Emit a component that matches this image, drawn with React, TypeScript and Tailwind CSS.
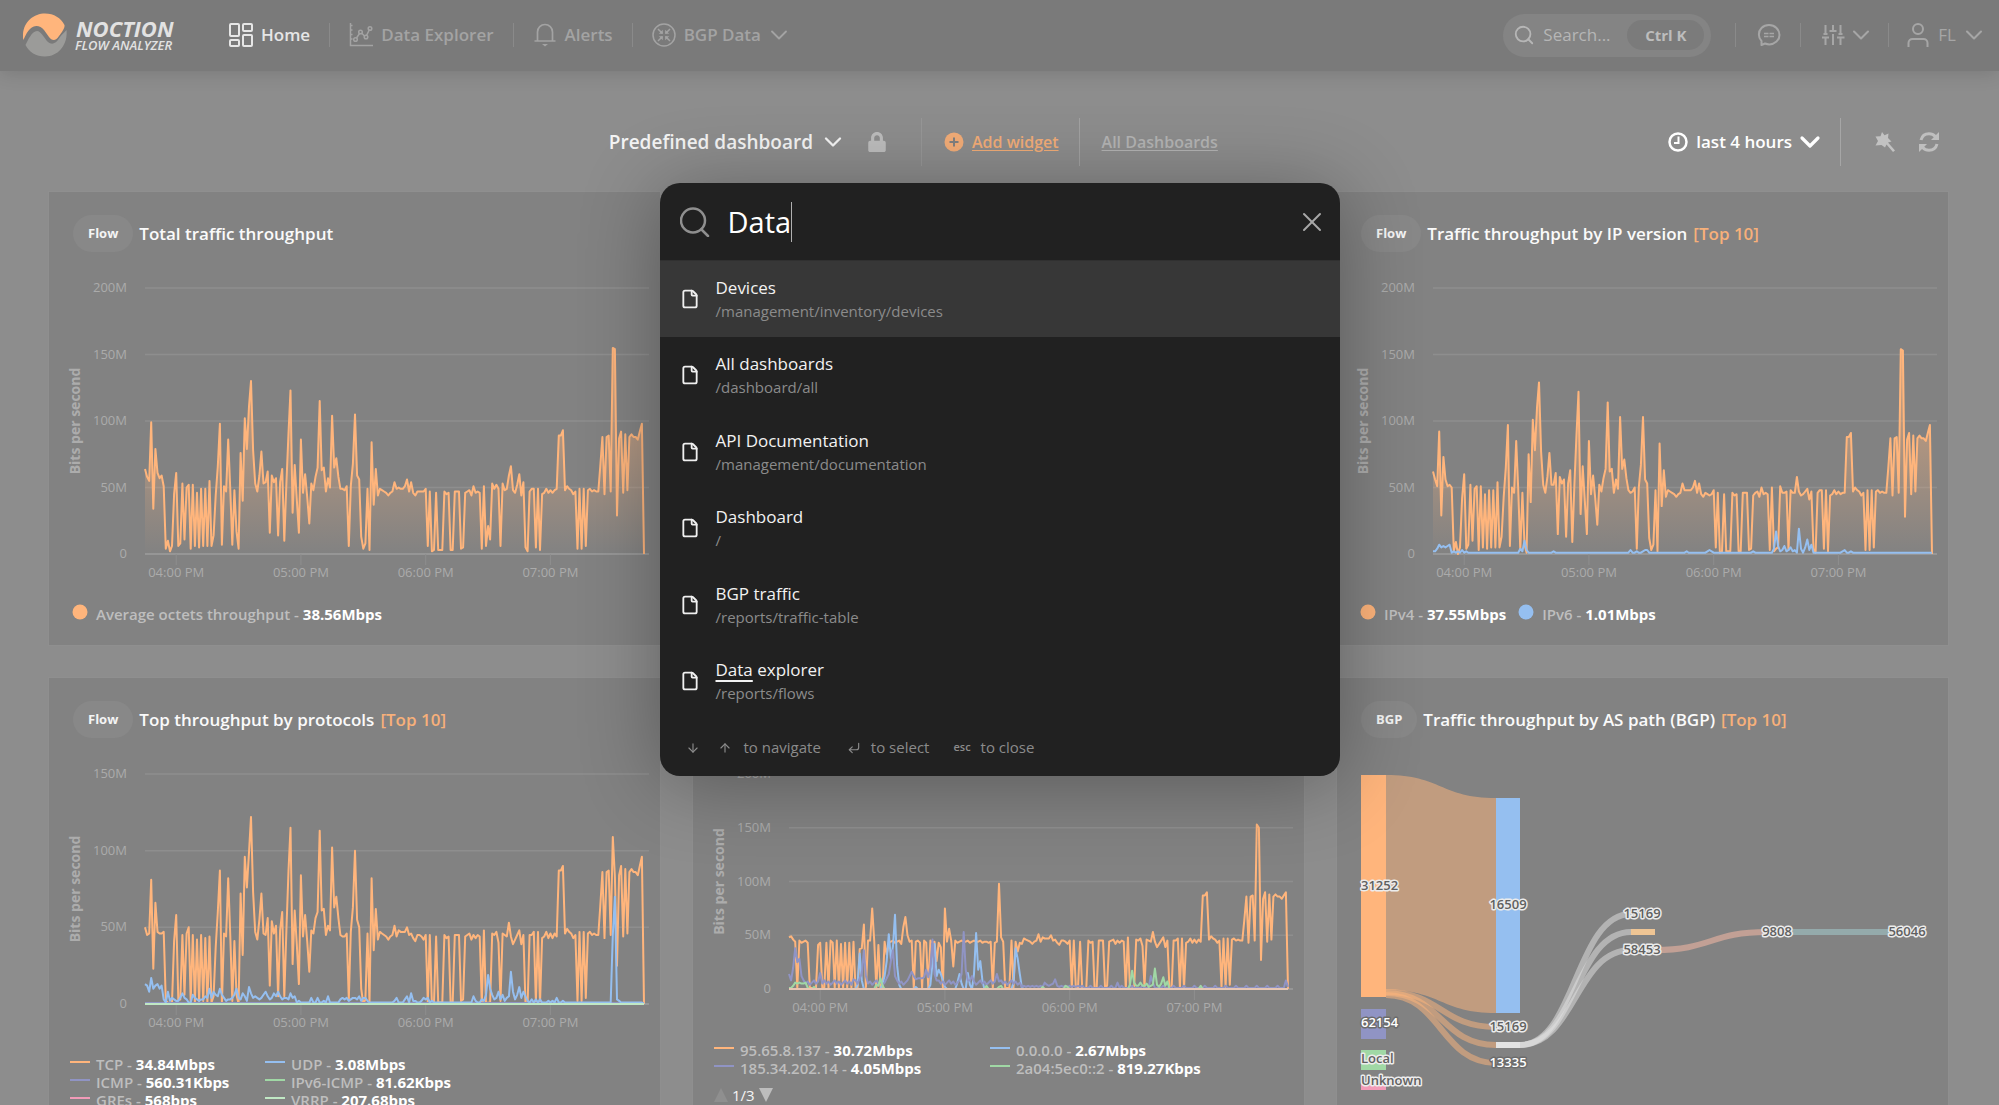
import React from "react";
import {
  ChevronDown,
  CornerDownLeft,
  ArrowDown,
  ArrowUp,
  File,
  Search,
  X,
} from "lucide-react";
import { FaLock } from "react-icons/fa";

const TOTAL = [
  64, 58, 55, 99, 34, 79, 61, 57, 59, 51, 4, 10, 2, 6, 45, 61, 6, 8, 53, 11, 50, 52, 4, 52, 6, 46, 5, 49, 6, 49,
  6, 55, 6, 14, 44, 66, 98, 7, 51, 47, 86, 50, 7, 48, 17, 4, 76, 40, 102, 79, 111, 130, 78, 53, 47, 59, 77, 53, 54, 62,
  16, 59, 54, 57, 14, 54, 64, 10, 53, 91, 123, 31, 67, 41, 16, 86, 46, 60, 43, 23, 53, 48, 58, 65, 115, 63, 65, 47, 57, 50,
  104, 65, 72, 58, 49, 49, 48, 51, 6, 51, 68, 105, 59, 56, 13, 4, 8, 49, 3, 84, 37, 64, 44, 49, 48, 47, 46, 44, 46, 47,
  54, 49, 50, 49, 49, 51, 56, 47, 54, 46, 44, 47, 47, 47, 47, 49, 6, 47, 2, 3, 46, 3, 3, 3, 47, 45, 46, 3, 3, 47,
  47, 47, 4, 5, 46, 47, 48, 44, 51, 46, 47, 46, 4, 51, 6, 21, 11, 53, 49, 52, 49, 6, 53, 48, 49, 59, 66, 48, 46, 52,
  60, 44, 54, 5, 2, 47, 49, 49, 5, 49, 3, 45, 46, 49, 46, 48, 46, 48, 49, 89, 89, 93, 48, 51, 49, 48, 45, 47, 4, 49,
  4, 49, 6, 48, 49, 47, 48, 47, 47, 66, 88, 45, 88, 89, 47, 155, 154, 29, 87, 92, 46, 90, 48, 88, 90, 88, 88, 86, 92, 98,
  0,
];

type Sparse = Record<number, number>;

const fill = (base: number, peaks: Sparse) => TOTAL.map((_, i) => peaks[i] ?? base);

const IPV6 = fill(1, {
  0: 2, 1: 2, 2: 4, 3: 7, 4: 5, 5: 6, 6: 5, 7: 6, 8: 7, 10: 2, 12: 2, 14: 3, 16: 2, 42: 4, 43: 2, 44: 10, 45: 3, 58: 2,
  95: 3, 98: 2, 101: 2, 102: 3, 103: 3, 122: 2, 132: 2, 133: 3, 134: 2, 154: 2, 164: 4, 165: 17, 166: 6, 167: 2, 168: 3, 169: 6, 170: 2, 171: 3,
  172: 5, 173: 2, 174: 3, 176: 19, 177: 4, 178: 1, 179: 5, 180: 11, 181: 3, 182: 7, 197: 2, 198: 3, 201: 2,
});

const UDP = fill(1, {
  0: 13, 1: 12, 2: 8, 3: 17, 4: 10, 5: 12, 6: 13, 7: 10, 8: 12, 9: 3, 11: 8, 12: 2, 13: 4, 14: 3, 15: 2, 16: 2, 17: 4, 18: 7, 19: 4, 20: 3,
  23: 6, 24: 4, 25: 3, 26: 2, 27: 3, 28: 3, 29: 5, 30: 4, 31: 10, 32: 4, 33: 8, 34: 6, 35: 5, 36: 10, 37: 6, 38: 4, 39: 2, 40: 3,
  41: 3, 42: 4, 43: 6, 44: 10, 45: 4, 46: 3, 47: 7, 48: 5, 49: 2, 50: 11, 51: 7, 52: 4, 53: 5, 54: 4, 55: 3, 56: 4, 57: 6, 58: 8,
  59: 5, 60: 3, 61: 4, 62: 7, 63: 5, 64: 8, 65: 5, 66: 3, 67: 4, 68: 4, 69: 3, 70: 7, 71: 4, 72: 5, 74: 2, 80: 4, 83: 4, 86: 2,
  88: 5, 94: 3, 95: 4, 96: 3, 97: 4, 98: 2, 99: 3, 100: 4, 101: 4, 102: 3, 103: 5, 104: 2, 105: 4, 106: 4, 107: 2, 120: 2,
  121: 4, 125: 3, 126: 5, 128: 7, 129: 2, 130: 2, 133: 2, 134: 4, 135: 3, 136: 4, 138: 2, 158: 5, 159: 2, 162: 3, 163: 2,
  164: 6, 165: 19, 166: 10, 167: 6, 168: 3, 169: 4, 170: 8, 171: 3, 172: 6, 173: 2, 174: 4, 175: 5, 176: 21, 177: 8, 178: 3,
  179: 6, 180: 11, 181: 4, 182: 8, 183: 5, 184: 2, 186: 3, 188: 3, 190: 3, 194: 2, 196: 2, 198: 4, 201: 2, 225: 45, 226: 70, 227: 3,
  228: 2, 240: 0,
});

const minus = (a: number[], b: number[]) => a.map((v, i) => Math.max(0, v - b[i] - 1));

const IPV4 = TOTAL.map((v, i) => Math.max(0, v - IPV6[i]));
const TCP = minus(TOTAL, UDP);
const HOST_PEAKS: Sparse = {
  0: 48, 1: 49, 2: 46, 3: 44, 4: 1, 35: 38, 36: 60, 39: 45, 40: 75, 55: 58, 56: 67, 57: 50, 70: 44, 75: 75, 77: 56, 78: 45, 79: 21,
  84: 44, 90: 44, 101: 98, 102: 48, 225: 153, 226: 150, 227: 27, 238: 87, 239: 90,
};
const HOST_A = TCP.map((v, i) => HOST_PEAKS[i] ?? (i < 112 ? (v < 25 ? 1 : Math.min(v, 43 + (i % 3))) : v));
const HOST_B = fill(0, {
  33: 4, 34: 33, 35: 8, 45: 5, 46: 12, 47: 26, 48: 51, 49: 28, 50: 40, 51: 69, 52: 22, 53: 4, 61: 2, 68: 4, 69: 24, 70: 42, 71: 12, 72: 18,
  73: 14, 74: 8, 75: 2, 81: 6, 82: 14, 83: 5, 86: 15, 87: 4, 89: 14, 90: 52, 91: 18, 92: 26, 93: 8, 108: 6, 109: 38, 110: 28,
  111: 14, 112: 1,
});
const HOST_C_PEAKS: Sparse = {
  0: 14, 1: 8, 2: 20, 3: 38, 4: 25, 5: 28, 6: 12, 7: 8, 8: 5, 15: 15, 16: 5, 31: 9, 34: 10, 35: 14, 36: 36, 37: 12, 47: 10, 48: 14, 49: 26, 50: 36, 51: 12,
  57: 8, 58: 12, 59: 16, 60: 12, 61: 9, 62: 10, 63: 10, 64: 10, 65: 11, 66: 18, 67: 11, 68: 20, 69: 46, 70: 14, 71: 8, 83: 14, 84: 53, 85: 18, 86: 8, 88: 12,
  100: 14, 101: 7, 123: 6, 124: 4, 126: 4, 127: 5, 128: 9, 129: 3, 158: 6, 174: 12, 175: 6, 239: 8, 240: 2,
};
const HOST_C = TOTAL.map((_, i) => HOST_C_PEAKS[i] ?? (i < 112 ? 4 + ((i * 7) % 5) : i < 142 ? 2 + (i % 2) : 1 + ((i * 3) % 5 === 0 ? 2 : 0)));
const HOST_D = fill(0, {
  0: 1, 1: 1, 2: 3, 3: 6, 4: 5, 5: 6, 6: 5, 7: 5, 8: 6, 9: 1, 12: 2, 42: 4, 43: 3, 44: 10, 45: 3, 95: 3, 101: 2, 102: 3, 122: 2, 133: 3, 134: 2,
  164: 4, 165: 17, 166: 6, 167: 3, 168: 3, 169: 6, 170: 3, 171: 3, 172: 5, 173: 2, 174: 3, 175: 4, 176: 19, 177: 4, 178: 2, 179: 5, 180: 11, 181: 3, 182: 7, 198: 3,
});

const ORANGE = "#ffb57c";
const BLUE = "#95bff0";
const PURPLE = "#9094c4";
const GREEN = "#a0d8a5";
const PINK = "#f29bb8";
const MINT = "#c0e8c4";

type Series = { color: string; data: number[]; area?: boolean };

type ChartProps = {
  id: string;
  label: string;
  ticks: number[];
  baseline: number;
  height: number;
  series: Series[];
};

function Chart({ id, label, ticks, baseline, height, series }: ChartProps) {
  const left = 96;
  const right = 600;
  const top = 27;
  const max = ticks[0];
  const step = 499 / 240;
  const x = (i: number) => Math.round((left + i * step) * 10) / 10;
  const y = (v: number) => Math.round((baseline - (v / max) * (baseline - top)) * 10) / 10;
  const middle = (top + baseline) / 2;
  return (
    <svg viewBox={`0 0 611 ${height}`} className="mt-[9px] block w-full" role="img" aria-label={label}>
      <defs>
        <linearGradient id={`${id}-area`} x1="0" y1="0" x2="0" y2="1">
          <stop offset="0" stopColor={ORANGE} stopOpacity="0.65" />
          <stop offset="1" stopColor={ORANGE} stopOpacity="0" />
        </linearGradient>
      </defs>
      {ticks.map((t) => (
        <g key={t}>
          <line x1={left} x2={right} y1={y(t)} y2={y(t)} stroke={t === 0 ? "#969696" : "#8e8e8e"} strokeWidth={t === 0 ? 2 : 1.5} />
          <text x={left - 18} y={y(t) + 4} textAnchor="end" className="fill-[#ababab] text-[13px]">
            {t === 0 ? "0" : `${t}M`}
          </text>
        </g>
      ))}
      {["04:00 PM", "05:00 PM", "06:00 PM", "07:00 PM"].map((t, i) => (
        <g key={t}>
          <line x1={x(15 + i * 60)} x2={x(15 + i * 60)} y1={baseline} y2={baseline + 11} stroke="#8e8e8e" />
          <text x={x(15 + i * 60)} y={baseline + 23} textAnchor="middle" className="fill-[#ababab] text-[13px]">
            {t}
          </text>
        </g>
      ))}
      <text
        transform={`translate(31 ${middle}) rotate(-90)`}
        textAnchor="middle"
        className="fill-[#acacac] text-[14px] font-bold"
      >
        Bits per second
      </text>
      {series.map((s, n) => {
        const points = s.data.map((v, i) => `${x(i)},${y(v)}`).join(" ");
        return (
          <g key={n}>
            {s.area && <polygon points={`${x(0)},${baseline} ${points}`} fill={`url(#${id}-area)`} />}
            <polyline points={points} fill="none" stroke={s.color} strokeWidth="2" strokeLinejoin="round" />
          </g>
        );
      })}
    </svg>
  );
}

function ribbon(x1: number, y1: number, x2: number, y2: number) {
  const m = (x1 + x2) / 2;
  return `M${x1} ${y1}C${m} ${y1} ${m} ${y2} ${x2} ${y2}`;
}

function Sankey() {
  const dark = [
    { t: "31252", x: 24, y: 138, a: "start" },
    { t: "Local", x: 24, y: 311, a: "start" },
    { t: "Unknown", x: 24, y: 333, a: "start" },
    { t: "16509", x: 171, y: 157, a: "middle" },
    { t: "15169", x: 171, y: 279, a: "middle" },
    { t: "15169", x: 305, y: 166, a: "middle" },
    { t: "58453", x: 305, y: 202, a: "middle" },
    { t: "9808", x: 440, y: 184, a: "middle" },
    { t: "56046", x: 570, y: 184, a: "middle" },
  ] as const;
  const light = [
    { t: "62154", x: 24, y: 275, a: "start" },
    { t: "13335", x: 171, y: 315, a: "middle" },
  ] as const;
  return (
    <svg viewBox="0 0 611 380" className="mt-[9px] block w-full" role="img" aria-label="Traffic throughput by AS path">
      <path d="M49 28C104 28 104 51 159 51V266C104 266 104 243 49 243Z" fill={ORANGE} fillOpacity="0.5" />
      <g fill="none" strokeWidth="6">
        <g stroke={ORANGE} strokeOpacity="0.5">
          <path d={ribbon(49, 245, 159, 280)} />
          <path d={ribbon(49, 246, 159, 298)} />
          <path d={ribbon(49, 248, 159, 316)} />
        </g>
        <g stroke="#e4e4e4" strokeOpacity="0.5">
          <path d={ribbon(183, 298, 294, 167)} />
          <path d={ribbon(183, 298, 294, 185)} />
          <path d={ribbon(183, 298, 294, 203)} />
        </g>
        <path d={ribbon(318, 203, 430, 185)} stroke="#c2a095" />
        <path d="M454 185H560" stroke="#94aaab" />
      </g>
      <rect x="24" y="28" width="25" height="222" fill={ORANGE} />
      <rect x="159" y="51" width="24" height="215" fill={BLUE} />
      <rect x="159" y="295" width="24" height="6" fill="#e4e4e4" />
      <rect x="294" y="182" width="24" height="6" fill="#efc594" />
      <rect x="24" y="262" width="25" height="30" fill={PURPLE} />
      <rect x="24" y="303" width="25" height="20" fill={GREEN} />
      <rect x="24" y="336" width="25" height="7" fill={PINK} />
      <g className="text-[13px] font-semibold" strokeLinejoin="round" strokeWidth="3" paintOrder="stroke">
        {dark.map((l, i) => (
          <text key={i} x={l.x} y={l.y + 5} textAnchor={l.a} fill="#606060" stroke="#ececec">
            {l.t}
          </text>
        ))}
        {light.map((l) => (
          <text key={l.t} x={l.x} y={l.y + 5} textAnchor={l.a} fill="#ffffff" stroke="#6c6c6c">
            {l.t}
          </text>
        ))}
      </g>
    </svg>
  );
}

type CardProps = { tag?: string; title?: string; top10?: boolean; children?: React.ReactNode };

function Card({ tag, title, top10, children }: CardProps) {
  return (
    <section className="min-h-[455px] border border-[#8f8f8f] bg-[#828282] pt-[23px]">
      <div className="flex h-[37px] items-center gap-1.5 pl-6">
        {tag && (
          <span className="flex h-[37px] items-center rounded-full bg-[#888888] px-[15px] text-[13px] font-bold text-[#f4f4f4]">{tag}</span>
        )}
        {title && (
          <h2 className="text-[17px] font-semibold text-[#fafafa]">
            {title}
            {top10 && <span className="ml-1.5 text-[#f7b07a]">[Top 10]</span>}
          </h2>
        )}
      </div>
      {children}
    </section>
  );
}

function DotLegend({ items }: { items: [string, string, string][] }) {
  return (
    <ul className="flex gap-3 pt-3 pl-[23px] text-[15px] leading-6 font-semibold">
      {items.map(([color, name, value]) => (
        <li key={name} className="flex items-center gap-2 text-[#bebebe]">
          <svg viewBox="0 0 16 16" className="mb-1 size-4" aria-hidden="true">
            <circle cx="8" cy="8" r="7.5" fill={color} />
          </svg>
          <span>
            {name} - <span className="font-bold text-white">{value}</span>
          </span>
        </li>
      ))}
    </ul>
  );
}

function LineLegend({ items, columns }: { items: [string, string, string][]; columns: string }) {
  return (
    <ul className={`grid pl-[21px] text-[15px] leading-[18px] font-semibold ${columns}`}>
      {items.map(([color, name, value]) => (
        <li key={name} className="flex items-center gap-1.5 whitespace-nowrap text-[#bebebe]">
          <svg viewBox="0 0 20 4" className="mb-1 h-1 w-5" aria-hidden="true">
            <path d="M0 2H20" stroke={color} strokeWidth="2" />
          </svg>
          <span>
            {name} - <span className="font-bold text-white">{value}</span>
          </span>
        </li>
      ))}
    </ul>
  );
}

function Logo() {
  return (
    <a href="#home" className="flex w-[206px] items-center gap-2">
      <svg viewBox="0 0 44 44" className="size-11" aria-hidden="true">
        <path d="M0 25C-1 10 10 0.5 22 0.5C31 0.5 38 5 41.500 12C42 15 39 19 36 23C33 28 29 28 26 24L21 17C17 12 11 12 7 16C3 20 2 24 0.500 27Z" fill={ORANGE} />
        <path d="M2.500 32C5 27 9 18 14 18C18 18 21 25 25 29C30 33 34 29 37 24C39 21 42 19 43.500 17C45 31 36 43.500 22 43.500C13 43.500 6 39 2.500 32Z" fill="#9b9b99" />
      </svg>
      <span className="flex flex-col text-[#e2e2e2] italic">
        <span className="pl-px text-[22px] leading-5 font-bold">NOCTION</span>
        <span className="text-[13px] leading-[14px] font-semibold">FLOW ANALYZER</span>
      </span>
    </a>
  );
}

function Divider({ className = "" }: { className?: string }) {
  return <span className={`h-6 w-px bg-[#8a8a8a] ${className}`} />;
}

function Header() {
  return (
    <header className="relative flex h-[71px] items-center justify-between bg-[#7a7a7a] pr-[15px] pb-px pl-[23px] text-[17px] shadow-[0_2px_18px_rgba(0,0,0,0.14)]">
      <div className="flex items-center">
        <Logo />
        <nav className="flex items-center font-semibold text-[#a3a3a3]">
          <a href="#home" className="flex items-center gap-2 text-[#e6e6e6]">
            <svg viewBox="0 0 24 24" className="size-6" fill="none" stroke="currentColor" strokeWidth="2" aria-hidden="true">
              <rect x="1" y="1" width="9" height="12" rx="1" />
              <rect x="14" y="1" width="9" height="7" rx="1" />
              <rect x="1" y="17" width="9" height="6" rx="1" />
              <rect x="14" y="12" width="9" height="11" rx="1" />
            </svg>
            Home
          </a>
          <Divider className="mx-[19px]" />
          <a href="#explorer" className="flex items-center gap-2">
            <svg viewBox="0 0 24 24" className="size-6" fill="none" stroke="currentColor" strokeWidth="1.5" aria-hidden="true">
              <path d="M1.500 0V22.500H24M1 2.500H3.500M1 7H3.500M1 11.500H3.500M1 16H3.500M7.500 15L10.500 10.500M12.500 10L16 13.500M17.500 12.500L20.500 6.500" />
              <circle cx="6.500" cy="16.500" r="1.800" />
              <circle cx="11.500" cy="9" r="1.800" />
              <circle cx="17" cy="14" r="1.800" />
              <circle cx="21" cy="5.500" r="1.800" />
            </svg>
            Data Explorer
          </a>
          <Divider className="mx-[19px]" />
          <a href="#alerts" className="flex items-center gap-2">
            <svg viewBox="0 0 24 24" className="size-6" fill="none" stroke="currentColor" strokeWidth="1.700" strokeLinejoin="round" aria-hidden="true">
              <path d="M1.500 18H22.500M4.500 18V9C4.500 4.500 8 1.500 12 1.500S19.500 4.500 19.500 9V18" />
              <path d="M9 21H15L12 23.500Z" fill="currentColor" stroke="none" />
            </svg>
            Alerts
          </a>
          <Divider className="mx-[19px]" />
          <button type="button" className="flex items-center gap-2">
            <svg viewBox="0 0 24 24" className="size-6" fill="none" stroke="currentColor" strokeWidth="1.500" aria-hidden="true">
              <circle cx="12" cy="12" r="11" />
              <path d="M6 6L10.500 10.500M18 6L13.500 10.500M6 18L10.500 13.500M18 18L13.500 13.500" />
              <path d="M10.800 6.800V10.800H6.800ZM13.200 6.800V10.800H17.200ZM6.800 13.200H10.800V17.200ZM17.200 13.200H13.200V17.200Z" fill="currentColor" stroke="none" />
            </svg>
            BGP Data
            <ChevronDown className="-m-1 size-7" strokeWidth={1.6} />
          </button>
        </nav>
      </div>
      <div className="flex items-center text-[#a6a6a6]">
        <button type="button" className="flex h-[43px] w-[208px] items-center rounded-full bg-[#848484] pr-[7px] pl-2.5 text-[#b6b6b6]">
          <Search className="size-[22px]" strokeWidth={2} />
          <span className="ml-2">Search...</span>
          <kbd className="ml-auto flex h-[30px] w-[77px] items-center justify-center rounded-full bg-[#7b7b7b] font-[inherit] text-[15px] font-bold text-[#bdbdbd]">
            Ctrl K
          </kbd>
        </button>
        <Divider className="mr-[22px] ml-6" />
        <button type="button" aria-label="Messages">
          <svg viewBox="0 0 24 24" className="-mx-px size-6" fill="none" stroke="currentColor" strokeWidth="2" aria-hidden="true">
            <path d="M4.500 22V18C1 14.500 1 8.500 4.500 5C8.500 1 15.500 1 19.500 5S23.500 15 19.500 18.500C15.500 22 10.500 21.500 8 20.500Z" strokeLinejoin="round" />
            <path d="M7 10.500H11.500M12.500 10.500H17M7 13.500H11.500M12.500 13.500H17" strokeWidth="1.500" />
          </svg>
        </button>
        <Divider className="mx-5" />
        <button type="button" aria-label="Settings" className="flex items-center gap-1.5">
          <svg viewBox="0 0 24 24" className="size-6" fill="none" stroke="currentColor" strokeWidth="2" aria-hidden="true">
            <path d="M4.500 2V11M12 2V7M19.500 2V11M4.500 14.500V22M12 11V22M19.500 14.500V22M1 14.500H8M8.500 8H15.500M16 14.500H23.500M2.500 11H6.500M17.500 11H21.500" />
          </svg>
          <ChevronDown className="-m-1 size-7" strokeWidth={1.8} />
        </button>
        <Divider className="mx-[17px]" />
        <button type="button" className="flex items-center gap-2">
          <svg viewBox="0 0 24 24" className="size-6" fill="none" stroke="currentColor" strokeWidth="2" aria-hidden="true">
            <circle cx="12" cy="6" r="5" />
            <path d="M2.500 24V20C2.500 17.500 4.500 16 6.500 16H17.500C19.500 16 21.500 17.500 21.500 20V24" />
          </svg>
          FL
          <ChevronDown className="-m-1 size-7" strokeWidth={1.8} />
        </button>
      </div>
    </header>
  );
}

function Toolbar() {
  return (
    <div className="flex h-12 items-center justify-between pl-[29.5%] pr-[10px] text-[16px] font-semibold">
      <div className="flex items-center">
        <button type="button" className="flex items-center gap-2.5 text-[19px] text-[#f4f4f4]">
          Predefined dashboard
          <ChevronDown className="-m-1 size-7" strokeWidth={2} />
        </button>
        <button type="button" aria-label="Lock dashboard" className="ml-6 text-[#bdbdbd]">
          <FaLock className="size-5" />
        </button>
        <span className="mx-[22px] ml-[34px] h-12 w-px bg-[#979797]" />
        <a href="#add" className="flex items-center gap-2 text-[#f3ad78]">
          <svg viewBox="0 0 20 20" className="size-5" aria-hidden="true">
            <circle cx="10" cy="10" r="9.500" fill="currentColor" />
            <path d="M10 5.500V14.500M5.500 10H14.500" stroke="#808080" strokeWidth="2" />
          </svg>
          <span className="underline underline-offset-2">Add widget</span>
        </a>
        <span className="mr-[22px] ml-5 h-12 w-px bg-[#a2a2a2]" />
        <a href="#all" className="text-[#b4b4b4] underline underline-offset-2">
          All Dashboards
        </a>
      </div>
      <div className="flex items-center">
        <button type="button" className="flex items-center gap-2 text-[17px] text-white">
          <svg viewBox="0 0 20 20" className="size-5" fill="none" stroke="currentColor" strokeWidth="2.500" aria-hidden="true">
            <circle cx="10" cy="10" r="8.500" />
            <path d="M10.500 4.500V11H6" strokeWidth="2" />
          </svg>
          last 4 hours
          <ChevronDown className="-m-1.5 size-8" strokeWidth={2.4} />
        </button>
        <span className="ml-5 h-12 w-px bg-[#a6a6a6]" />
        <button type="button" aria-label="Highlight" className="ml-[34px] text-[#c2c2c2]">
          <svg viewBox="0 0 20 20" className="size-5" fill="currentColor" aria-hidden="true">
            <path d="M7 0L9.500 3.200L13.500 1.500L13 6L16.500 9.500L13 10.500L20 18.500L18 20L11.500 12.500L10 15.500L6.500 13L0.500 13.500L3 9L0.500 4.500L5.500 4.200Z" />
          </svg>
        </button>
        <button type="button" aria-label="Refresh" className="ml-6 text-[#bfbfbf]">
          <svg viewBox="0 0 20 20" className="size-5" fill="none" stroke="currentColor" strokeWidth="3" aria-hidden="true">
            <path d="M2 8C3 4 6 1.700 10 1.700C12.500 1.700 14.800 2.800 16.300 4.500M18 12C17 16 14 18.300 10 18.300C7.500 18.300 5.200 17.200 3.700 15.500" />
            <path d="M20 0V8H12Z M0 20V12H8Z" fill="currentColor" stroke="none" />
          </svg>
        </button>
      </div>
    </div>
  );
}

const RESULTS = [
  { title: "Devices", path: "/management/inventory/devices" },
  { title: "All dashboards", path: "/dashboard/all" },
  { title: "API Documentation", path: "/management/documentation" },
  { title: "Dashboard", path: "/" },
  { title: "BGP traffic", path: "/reports/traffic-table" },
  { title: "Data explorer", path: "/reports/flows", match: "Data" },
];

function SearchDialog() {
  return (
    <div
      role="dialog"
      aria-label="Search"
      className="w-[680px] max-w-full overflow-hidden rounded-[20px] bg-[#212121] shadow-[0_6px_80px_rgba(0,0,0,0.32)]"
    >
      <div className="flex h-[77px] items-center pr-3 pl-5">
        <label htmlFor="query" aria-label="Search">
          <svg viewBox="0 0 30 30" className="size-[30px]" fill="none" stroke="#8f8f8f" strokeWidth="2.500" strokeLinecap="round" aria-hidden="true">
            <circle cx="13" cy="13.500" r="12" />
            <path d="M21.500 22.500L28 29" />
          </svg>
        </label>
        <div className="ml-[18px] flex flex-1 items-center">
          <input id="query" defaultValue="Data" className="field-sizing-content bg-transparent text-[29px] text-white outline-none" />
          <span className="h-10 w-px bg-[#b0b0b0]" />
        </div>
        <button type="button" aria-label="Close" className="text-[#a8a8a8]">
          <X className="size-8" strokeWidth={1.5} />
        </button>
      </div>
      <ul>
        {RESULTS.map((r, i) => (
          <li key={r.path} className="h-[77px] even:h-[76px]">
            <a
              href={`#${r.path}`}
              className={`flex h-full items-center gap-4 border-t pb-px pl-5 ${
                i === 0 ? "border-[#303030] bg-[#373737]" : "border-transparent"
              }`}
            >
              <File className="size-5 text-[#f0f0f0]" strokeWidth={2.2} />
              <span className="flex flex-col">
                <span className="text-[17px] leading-6 text-[#f2f2f2]">
                  {r.match ? (
                    <>
                      <mark className="bg-transparent text-inherit underline decoration-2 underline-offset-4">{r.match}</mark>
                      {r.title.slice(r.match.length)}
                    </>
                  ) : (
                    r.title
                  )}
                </span>
                <span className="text-[15px] leading-[22px] text-[#8b8b8b]">{r.path}</span>
              </span>
            </a>
          </li>
        ))}
      </ul>
      <div className="flex h-[57px] items-center pl-[26px] text-[15px] text-[#8b8b8b]">
        <ArrowDown className="size-3.5" />
        <ArrowUp className="ml-[18px] size-3.5" />
        <span className="ml-3">to navigate</span>
        <CornerDownLeft className="ml-[26px] size-3.5" />
        <span className="ml-2.5">to select</span>
        <span className="ml-6 text-[11px] font-semibold">esc</span>
        <span className="ml-2.5">to close</span>
      </div>
    </div>
  );
}

export default function App() {
  return (
    <div className="relative h-screen overflow-hidden bg-[#8d8d8d] font-['Open_Sans',sans-serif]">
      <Header />
      <main className="px-12 pt-[47px] pr-[50px]">
        <Toolbar />
        <div className="mt-[25px] grid grid-cols-3 gap-[31px]">
          <Card tag="Flow" title="Total traffic throughput">
            <Chart
              id="total"
              label="Total traffic throughput"
              ticks={[200, 150, 100, 50, 0]}
              baseline={293}
              height={329}
              series={[{ color: ORANGE, data: TOTAL, area: true }]}
            />
            <DotLegend items={[[ORANGE, "Average octets throughput", "38.56Mbps"]]} />
          </Card>
          <Card />
          <Card tag="Flow" title="Traffic throughput by IP version" top10>
            <Chart
              id="ip"
              label="Traffic throughput by IP version"
              ticks={[200, 150, 100, 50, 0]}
              baseline={293}
              height={329}
              series={[
                { color: ORANGE, data: IPV4, area: true },
                { color: BLUE, data: IPV6 },
              ]}
            />
            <DotLegend
              items={[
                [ORANGE, "IPv4", "37.55Mbps"],
                [BLUE, "IPv6", "1.01Mbps"],
              ]}
            />
          </Card>
          <Card tag="Flow" title="Top throughput by protocols" top10>
            <Chart
              id="protocols"
              label="Top throughput by protocols"
              ticks={[150, 100, 50, 0]}
              baseline={257}
              height={308}
              series={[
                { color: ORANGE, data: TCP },
                { color: PURPLE, data: fill(0.7, {}) },
                { color: BLUE, data: UDP },
                { color: MINT, data: fill(0, {}) },
              ]}
            />
            <LineLegend
              columns="grid-cols-[195px_1fr]"
              items={[
                [ORANGE, "TCP", "34.84Mbps"],
                [BLUE, "UDP", "3.08Mbps"],
                [PURPLE, "ICMP", "560.31Kbps"],
                [GREEN, "IPv6-ICMP", "81.62Kbps"],
                [PINK, "GREs", "568bps"],
                [MINT, "VRRP", "207.68bps"],
              ]}
            />
          </Card>
          <Card>
            <Chart
              id="sources"
              label="Top throughput by sources"
              ticks={[200, 150, 100, 50, 0]}
              baseline={242}
              height={294}
              series={[
                { color: ORANGE, data: HOST_A },
                { color: BLUE, data: HOST_B },
                { color: PURPLE, data: HOST_C },
                { color: GREEN, data: HOST_D },
                { color: "#e6c6b4", data: fill(0, {}) },
              ]}
            />
            <LineLegend
              columns="grid-cols-[276px_1fr]"
              items={[
                [ORANGE, "95.65.8.137", "30.72Mbps"],
                [BLUE, "0.0.0.0", "2.67Mbps"],
                [PURPLE, "185.34.202.14", "4.05Mbps"],
                [GREEN, "2a04:5ec0::2", "819.27Kbps"],
              ]}
            />
            <div className="flex items-center gap-1 pt-2 pl-[21px] text-[15px] leading-5 text-[#f5f5f5]">
              <button type="button" aria-label="Previous page" className="text-[#8f8f8f]">
                <svg viewBox="0 0 14 14" className="size-3.5" fill="currentColor" aria-hidden="true">
                  <path d="M0 14L7 0L14 14Z" />
                </svg>
              </button>
              1/3
              <button type="button" aria-label="Next page" className="text-[#bdbdbd]">
                <svg viewBox="0 0 14 14" className="size-3.5" fill="currentColor" aria-hidden="true">
                  <path d="M0 0L7 14L14 0Z" />
                </svg>
              </button>
            </div>
          </Card>
          <Card tag="BGP" title="Traffic throughput by AS path (BGP)" top10>
            <Sankey />
          </Card>
        </div>
      </main>
      <div className="absolute inset-0 flex items-start justify-center pt-[183px]">
        <SearchDialog />
      </div>
    </div>
  );
}
